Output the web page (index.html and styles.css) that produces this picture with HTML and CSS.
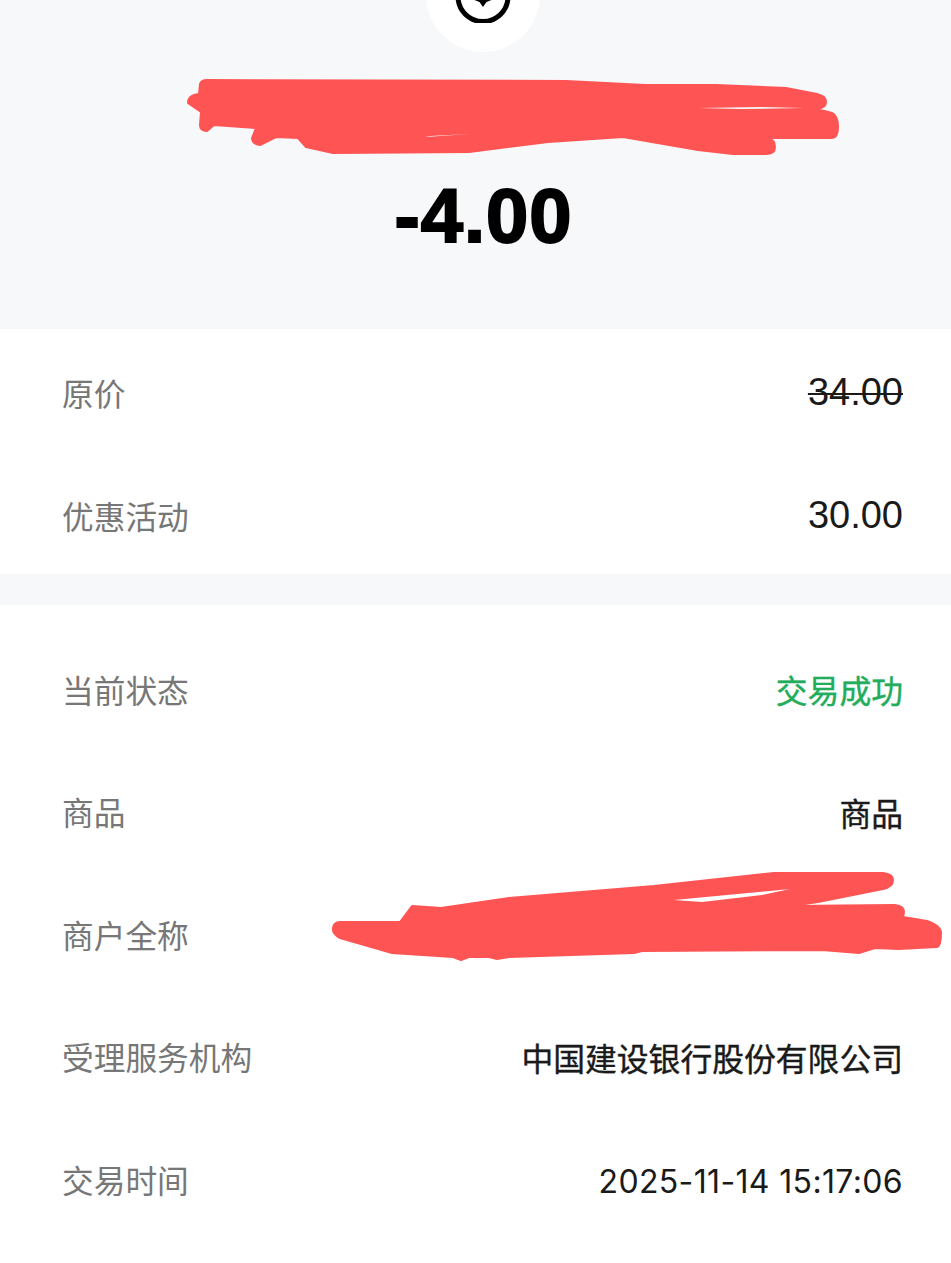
FILE: index.html
```html
<!DOCTYPE html>
<html lang="zh-CN">
<head>
  <meta charset="UTF-8" />
  <meta name="viewport" content="width=device-width, initial-scale=1.0"/>
  <title>账单详情</title>
  <link rel="stylesheet" href="styles.css">
</head>
<body>

  <div class="page">
    <header class="summary">
      <div class="logo">
        <svg class="logo-icon" viewBox="0 0 56 56">
          <circle cx="28" cy="29.5" r="25" fill="none" stroke="#000" stroke-width="5"/>
          <path d="M19.5 20h17v13l-5 2-3.500 5-3.500-5-5-2z" fill="#000"/>
        </svg>
      </div>
      <div class="amount">-4.00</div>
    </header>

    <section class="card card-price">
      <div class="row">
        <span class="label">原价</span>
        <span class="num strike">34.00</span>
      </div>
      <div class="row">
        <span class="label">优惠活动</span>
        <span class="num">30.00</span>
      </div>
    </section>

    <section class="card card-detail">
      <div class="row">
        <span class="label">当前状态</span>
        <span class="value success">交易成功</span>
      </div>
      <div class="row">
        <span class="label">商品</span>
        <span class="value">商品</span>
      </div>
      <div class="row">
        <span class="label">商户全称</span>
      </div>
      <div class="row">
        <span class="label">受理服务机构</span>
        <span class="value">中国建设银行股份有限公司</span>
      </div>
      <div class="row">
        <span class="label">交易时间</span>
        <span class="value time">2025-11-14 15:17:06</span>
      </div>
    </section>

    <!-- red marker scribbles drawn over the screenshot -->
    <svg class="scribble" viewBox="0 0 951 1263">
      <path fill="#ff5454" stroke="#ff5454" stroke-width="2" stroke-linejoin="round" d="M207 80L566 81 645 85 716 85 786 88 817 94Q826 96 826 102 826 108 817 109L832 113Q838 116 838 127 838 138 832 138L768 138Q775 140 775 147 775 154 766 154L733 154 698 150 623 137 548 142 469 152 333 153 306 147 298 138 276 137 260 145Q252 144 252 138L256 128 214 125 207 131Q200 131 200 125L201 112 188 103Q188 95 199 94L200 84Q201 80 207 80Z"/>
      <path fill="#ff5454" d="M690 100H820V112H690Z"/>
      <path fill="#f7f8fa" d="M698 108L760 107 804 108 740 109Z"/>
      <path fill="#f7f8fa" d="M425 137L470 134 430 136Z"/>
      <path fill="#ff5454" stroke="#ff5454" stroke-width="2" stroke-linejoin="round" d="M340 922L400 922 412 906 441 908 509 898 654 886 774 873 883 873Q893 874 893 880 893 887 883 889L818 902 790 906 895 905Q904 906 904 912L903 917 927 921Q941 926 941 933 941 946 937 947L899 949 875 948 859 953 822 950 642 951 634 953 509 957 497 959 489 957 469 957 461 960 453 957 392 953 340 938Q332 934 333 928 334 922 340 922Z"/>
      <path fill="#fff" d="M674 900L790 889 762 895 702 902Z"/>
    </svg>
  </div>

</body>
</html>
```

FILE: styles.css
```css
body {
  font-family: "Liberation Sans", "Noto Sans CJK SC", sans-serif;
  margin: 0;
  padding: 0;
  background-color: #f7f8fa;
}

.page {
  position: relative;
  height: 1263px;
  overflow: hidden;
}

.summary {
  height: 329px;
  display: flex;
  flex-direction: column;
  align-items: center;
}

.logo {
  width: 114px;
  height: 114px;
  margin-top: -62px;
  margin-left: 15px;
  border-radius: 50%;
  background-color: #fff;
  display: flex;
  align-items: center;
  justify-content: center;
}

.logo-icon {
  width: 56px;
  height: 56px;
}

.amount {
  margin-top: 119px;
  margin-left: 16px;
  font-size: 76px;
  letter-spacing: 1px;
  line-height: 90px;
  font-weight: bold;
  color: #000;
  -webkit-text-stroke: 2px #000;
}

.card {
  background-color: #fff;
  padding: 0 48px 0 62px;
}

.card-price {
  height: 245px;
  margin-bottom: 31px;
}

.card-detail {
  height: 658px;
  padding-top: 22.5px;
  box-sizing: border-box;
}

.row {
  height: 122.5px;
  display: flex;
  align-items: center;
  justify-content: space-between;
}

.card-price .row {
  padding-top: 4px;
  box-sizing: border-box;
}

.label {
  font-size: 31.7px;
  color: #777;
}

.value {
  font-size: 31.8px;
  padding-top: 1px;
  color: #1a1a1a;
  -webkit-text-stroke: 0.4px #1a1a1a;
}

.num {
  font-size: 38px;
  padding-top: 1px;
  color: #1a1a1a;
}

.strike {
  text-decoration: line-through;
  text-decoration-thickness: 2px;
}

.success {
  color: #22ac5c;
  -webkit-text-stroke: 0.4px #22ac5c;
}

.time {
  font-family: Inter, sans-serif;
  font-size: 32px;
  letter-spacing: 0.35px;
  padding-top: 5px;
  -webkit-text-stroke: 0;
}

.scribble {
  position: absolute;
  top: 0;
  left: 0;
  width: 951px;
  height: 1263px;
}
```
